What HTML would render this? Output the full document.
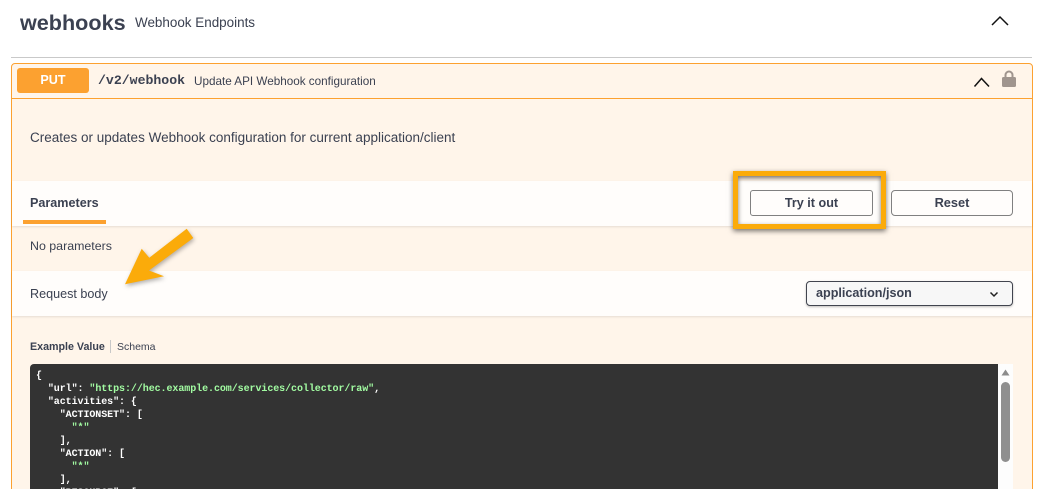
<!DOCTYPE html>
<html><head><meta charset="utf-8"><style>
*{box-sizing:border-box}
html,body{margin:0;padding:0;background:#fff;width:1041px;height:489px;overflow:hidden}
#w{position:absolute;left:0;top:0;width:1041px;height:489px;overflow:hidden;font-family:"Liberation Sans",sans-serif;color:#3b4151}
.a{position:absolute;white-space:nowrap}
pre.a{white-space:pre;margin:0;font:bold 10px/13px "Liberation Mono",monospace;letter-spacing:-.07px;color:#fff}
pre b{color:#a2fca2;font-weight:bold}
</style></head><body><div id="w">
<div class="a" style="left:20px;top:9px;font-size:21.6px;line-height:28px;font-weight:bold">webhooks</div>
<div class="a" style="left:135px;top:15px;font-size:13.45px;line-height:16px">Webhook Endpoints</div>
<svg class="a" style="left:990px;top:14px" width="20" height="14"><path d="M2 11L10 3L18 11" fill="none" stroke="#111" stroke-width="1.5"/></svg>
<div class="a" style="left:11px;top:57px;width:1021px;height:1px;background:#c9c9c9"></div>

<div class="a" style="left:11px;top:63px;width:1022px;height:440px;background:#fff5ea;border:1px solid #fca130;border-radius:4px"></div>
<div class="a" style="left:12px;top:98px;width:1020px;height:1px;background:#fca130"></div>
<div class="a" style="left:17px;top:68px;width:72px;height:25px;background:#fca130;border-radius:3px;color:#fff;font-size:12.6px;font-weight:bold;line-height:25px;text-align:center">PUT</div>
<div class="a" style="left:98px;top:73px;font:bold 13.2px/16px 'Liberation Mono',monospace">/v2/webhook</div>
<div class="a" style="left:194px;top:74px;font-size:11.7px;line-height:16px">Update API Webhook configuration</div>
<svg class="a" style="left:973px;top:75px" width="18" height="13"><path d="M1.5 11.5L8.5 3.5L16 11.5" fill="none" stroke="#111" stroke-width="1.5"/></svg>
<svg class="a" style="left:1001px;top:70px" width="16" height="18"><path d="M4.5 8V5a3.5 3.5 0 0 1 7 0V8" fill="none" stroke="#a0958e" stroke-width="2"/><rect x="1" y="7" width="14" height="10" rx="1.5" fill="#a0958e"/></svg>

<div class="a" style="left:30px;top:130px;font-size:13.5px;line-height:16px">Creates or updates Webhook configuration for current application/client</div>

<div class="a" style="left:12px;top:181px;width:1020px;height:45px;background:#fffdfb;box-shadow:0 1px 2px rgba(0,0,0,.1)"></div>
<div class="a" style="left:30px;top:195px;font-size:12.6px;line-height:16px;font-weight:bold">Parameters</div>
<div class="a" style="left:23px;top:220px;width:83px;height:4px;background:#fca130"></div>

<div class="a" style="left:733px;top:171px;width:153px;height:58px;border:5.5px solid #fbab0a;box-shadow:0 2px 5px rgba(0,0,0,.55),inset 0 2px 5px rgba(0,0,0,.55)"></div>
<div class="a" style="left:750px;top:190px;width:123px;height:26px;border:1px solid #808080;border-radius:3px;font-size:12.6px;font-weight:bold;line-height:24px;text-align:center;background:#fffdfb">Try it out</div>
<div class="a" style="left:891px;top:190px;width:122px;height:26px;border:1px solid #808080;border-radius:4px;font-size:12.8px;font-weight:bold;line-height:23px;text-align:center;background:#fffdfb">Reset</div>

<div class="a" style="left:30px;top:238px;font-size:12.4px;line-height:16px">No parameters</div>

<div class="a" style="left:12px;top:271px;width:1020px;height:45px;background:#fffdfb;box-shadow:0 1px 2px rgba(0,0,0,.1)"></div>
<div class="a" style="left:30px;top:286px;font-size:12.6px;line-height:16px">Request body</div>
<svg class="a" style="left:120px;top:225px;filter:drop-shadow(1px 2px 2px rgba(0,0,0,.3))" width="80" height="65"><path d="M66.7 3.7L73.3 13L29 45.5L44 51.3L5 59.3L21.7 23.7L29.3 32.7Z" fill="#fbab0a"/></svg>

<div class="a" style="left:806px;top:281px;width:207px;height:25px;border:1px solid #41444e;border-radius:4px;background:#f7f7f7;box-shadow:0 1px 2px rgba(0,0,0,.25);font-size:12.6px;font-weight:bold;line-height:22px;padding-left:9px">application/json</div>
<svg class="a" style="left:988px;top:290px" width="12" height="9"><path d="M2.5 2.5L6 6L9.5 2.5" fill="none" stroke="#222" stroke-width="1.5"/></svg>

<div class="a" style="left:30px;top:341px;font-size:10.7px;line-height:13px;font-weight:bold">Example Value</div>
<div class="a" style="left:110px;top:340px;width:1px;height:13px;background:#c8c8c8"></div>
<div class="a" style="left:117px;top:341px;font-size:10.5px;line-height:13px">Schema</div>

<div class="a" style="left:30px;top:364px;width:968px;height:125px;background:#333;border-radius:4px 0 0 0"></div>
<pre class="a" style="left:36px;top:370px">{
  "url": <b>"https://hec.example.com/services/collector/raw"</b>,
  "activities": {
    "ACTIONSET": [
      <b>"*"</b>
    ],
    "ACTION": [
      <b>"*"</b>
    ],
    "RESOURCE": [</pre>
<div class="a" style="left:998px;top:364px;width:15px;height:125px;background:#fdfdfd"></div>
<svg class="a" style="left:1001px;top:369px" width="9" height="7"><path d="M4.5 0.5L8.5 6.5H0.5Z" fill="#8c8c8c"/></svg>
<div class="a" style="left:1001px;top:382px;width:9px;height:80px;background:#8f8f8f;border-radius:4.5px"></div>
</div></body></html>
